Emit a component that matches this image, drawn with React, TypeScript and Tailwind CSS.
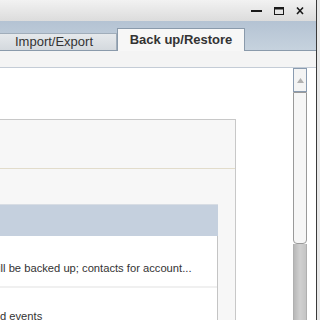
import React from 'react'

function WindowControls() {
  return (
    <div className="flex items-center gap-[12px] pr-[12px]">
      <svg width="11" height="10" viewBox="0 0 11 10">
        <rect x="0" y="4" width="11" height="2" fill="#1a1a1a" />
      </svg>
      <svg width="10" height="10" viewBox="0 0 10 10">
        <rect x="0.5" y="1.5" width="9" height="7" fill="none" stroke="#1a1a1a" />
        <rect x="0" y="1" width="10" height="2.5" fill="#1a1a1a" />
      </svg>
      <svg width="8" height="10" viewBox="0 0 8 10">
        <path d="M1 1.5 L7 8 M7 1.5 L1 8" stroke="#1a1a1a" strokeWidth="1.6" />
      </svg>
    </div>
  )
}

function Scrollbar() {
  return (
    <div className="flex w-[14px] shrink-0 flex-col">
      <div className="flex h-[24px] shrink-0 items-center justify-center border border-[#8a9bb0] bg-[#f4f4f4]">
        <svg width="7" height="5" viewBox="0 0 7 5">
          <path d="M0 5 L3.5 0 L7 5 Z" fill="#b0b0b0" />
        </svg>
      </div>
      <div className="h-[152px] shrink-0 rounded-b-[4px] border border-[#9a9a9a] bg-[#f6f6f6]" />
      <div className="flex-1 border-x border-[#b0b0b0] bg-gradient-to-r from-[#b8b8b8] via-[#d0d0d0] to-[#c4c4c4]" />
    </div>
  )
}

export default function App() {
  return (
    <div
      className="flex h-[320px] w-[320px] overflow-hidden bg-[#f4f4f4] text-[#222]"
      style={{ fontFamily: '"Liberation Sans", Arial, sans-serif' }}
    >
      <div className="flex w-[316px] flex-col overflow-hidden">
        <div className="flex h-[21px] shrink-0 items-center justify-end bg-gradient-to-b from-[#f2f2f2] to-[#dcdcdc]">
          <WindowControls />
        </div>
        <div className="flex h-[30px] shrink-0 items-end border-b border-[#8a9aab] bg-gradient-to-b from-[#b4c3d3] to-[#c6d2de]">
          <div className="flex h-[17px] w-[117px] items-center border-r border-t border-[#a0adba] bg-gradient-to-b from-[#e6e9ec] to-[#d4d9de] pl-[15px] text-[13px] text-[#333]">
            Import/Export
          </div>
          <div className="-mb-px flex h-[23px] w-[128px] items-center justify-center border-x border-t border-[#8a9aab] bg-[#f7f7f7] text-[13px] font-bold text-[#333]">
            Back up/Restore
          </div>
        </div>
        <div className="h-[16px] shrink-0" />
        <div className="flex flex-1 shrink-0 border-t border-[#c4ccd6] bg-white pr-[9px]">
          <div className="flex flex-1 flex-col pt-[51px]">
            <div className="mr-[57px] flex flex-1 flex-col border-r border-[#c8c8c8] bg-[#f7f7f7]">
              <div className="h-[49px] shrink-0 border-t border-[#c8c8c8]" />
              <div className="h-px shrink-0 bg-[#e2dccb]" />
              <div className="flex flex-1 flex-col pr-[17px] pt-[35px]">
                <div className="h-[32px] shrink-0 border-t border-[#d8dde4] bg-[#c5d0de]" />
                <div className="flex flex-1 flex-col border-r border-[#c4c4c4] bg-white">
                  <div className="h-[50px] shrink-0 overflow-hidden whitespace-nowrap pt-[26px] text-[11.2px] leading-[13px] text-[#333]">
                    <span className="-ml-[10px]">will be backed up; contacts for account...</span>
                  </div>
                  <div className="h-[2px] shrink-0 bg-[#f0f0f0]" />
                  <div className="h-[36px] shrink-0 overflow-hidden whitespace-nowrap pt-[22px] text-[11.2px] leading-[13px] text-[#333]">
                    <span className="-ml-[61px]">Calendar and events</span>
                  </div>
                </div>
              </div>
            </div>
          </div>
          <Scrollbar />
        </div>
      </div>
      <div className="w-px bg-[#3a3a3a]" />
      <div className="flex-1 bg-[#e8e8e8]" />
    </div>
  )
}
